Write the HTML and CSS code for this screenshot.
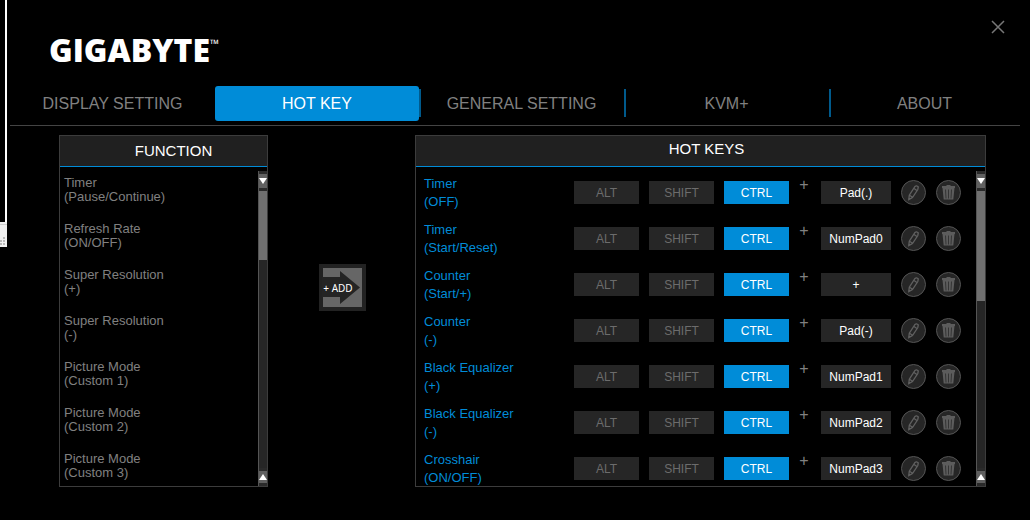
FILE: index.html
```html
<!DOCTYPE html>
<html lang="en">
<head>
<meta charset="utf-8">
<title>Hot Key</title>
<link rel="stylesheet" href="styles.css">
</head>
<body>
<svg class="defs" width="0" height="0" aria-hidden="true">
  <symbol id="pencil" viewBox="0 0 25 25">
    <circle cx="12.500" cy="12.500" r="12" fill="#262626" stroke="#555"/>
    <path d="M14 6.500Q15.500 5 17.300 7L16.800 9.500 11.500 17.500 7.800 19.500 8.300 15.200z M13 8.500l3.300 2.300 M8.500 15.300l3 2" fill="none" stroke="#606060" stroke-width="1.300"/>
  </symbol>
  <symbol id="trash" viewBox="0 0 25 25">
    <circle cx="12.500" cy="12.500" r="12" fill="#262626" stroke="#555"/>
    <path d="M6 6h4.500v-1h4v1H19v2H6z M6.500 8h12l-1.200 11.500H7.700z" fill="#5c5c5c"/>
    <path d="M9.500 9.500l.5 9M12.500 9.500v9M15.500 9.500l-.5 9" stroke="#303030" stroke-width=".9"/>
  </symbol>
</svg>

<div class="window-edge" aria-hidden="true">
  <div class="edge-line"></div>
  <svg class="grip" viewBox="0 0 7 25"><path d="M0 0h7v25H0z" fill="#f0f0f0"/><path d="M0 2.500h7" stroke="#d0d0d0"/><path d="M3 15h2v2H3zM0 18h2v2H0zM3 18h2v2H3zM0 21h2v2H0zM3 21h2v2H3z" fill="#b8b8b8"/></svg>
</div>

<header class="header">
  <div class="logo">GIGABYTE<span class="tm">™</span></div>
  <button class="close" aria-label="Close"><svg viewBox="0 0 14 14"><path d="M1 1l12 12M13 1L1 13"/></svg></button>
</header>

<nav class="tabs">
  <a class="tab" href="#display">DISPLAY SETTING</a>
  <a class="tab active" href="#hotkey" aria-current="page">HOT KEY</a>
  <a class="tab divided" href="#general">GENERAL SETTING</a>
  <a class="tab divided" href="#kvm">KVM+</a>
  <a class="tab divided" href="#about">ABOUT</a>
</nav>

<main class="main">
  <section class="panel">
    <h2 class="panel-title low">FUNCTION</h2>
    <div class="panel-body">
      <ul class="functions">
        <li>Timer<br>(Pause/Continue)</li>
        <li>Refresh Rate<br>(ON/OFF)</li>
        <li>Super Resolution<br>(+)</li>
        <li>Super Resolution<br>(-)</li>
        <li>Picture Mode<br>(Custom 1)</li>
        <li>Picture Mode<br>(Custom 2)</li>
        <li>Picture Mode<br>(Custom 3)</li>
      </ul>
      <div class="scrollbar">
        <button class="step" aria-label="Scroll functions up"><svg viewBox="0 0 8 6"><path d="M0 0h8L4 6z"/></svg></button>
        <div class="track"><div class="thumb short"></div></div>
        <button class="step end" aria-label="Scroll functions down"><svg viewBox="0 0 8 6"><path d="M0 6h8L4 0z"/></svg></button>
      </div>
    </div>
  </section>

  <button class="add">
    <svg viewBox="0 0 47 47" aria-hidden="true"><path d="M0 0h47v47H0z" fill="#222"/><path d="M4 4h39v39H4z" fill="#666"/><path d="M3 13h18V7l20 16.500L21 40v-7H3z" fill="#242424"/></svg>
    <span class="add-label">+ ADD</span>
  </button>

  <section class="panel">
    <h2 class="panel-title shifted">HOT KEYS</h2>
    <div class="panel-body">
      <ul class="hotkeys" id="hotkeys"></ul>
      <div class="scrollbar">
        <button class="step" aria-label="Scroll hot keys up"><svg viewBox="0 0 8 6"><path d="M0 0h8L4 6z"/></svg></button>
        <div class="track"><div class="thumb long"></div></div>
        <button class="step end" aria-label="Scroll hot keys down"><svg viewBox="0 0 8 6"><path d="M0 6h8L4 0z"/></svg></button>
      </div>
    </div>
  </section>
</main>
<script src="app.js"></script>
</body>
</html>
```

FILE: styles.css
```css
* { box-sizing: border-box; }
body {
  margin: 0;
  background: #000;
  color: #808080;
  font-family: "Liberation Sans", Arial, sans-serif;
  font-size: 13px;
}
button {
  padding: 0;
  border: 0;
  background: none;
  color: inherit;
  font: inherit;
}
ul { margin: 0; padding: 0; list-style: none; }
svg { display: block; }
.defs { position: absolute; }

.window-edge { position: absolute; left: 0; top: 0; width: 7px; }
.edge-line { height: 222px; margin-left: 5px; width: 2px; background: #fff; }
.grip { width: 7px; height: 25px; }

.header {
  display: flex;
  justify-content: space-between;
  align-items: flex-start;
  height: 85px;
  padding: 20px 25px 0 49px;
}
.logo {
  display: flex;
  align-items: flex-start;
  padding-top: 10px;
  color: #fff;
  font-family: "Open Sans", sans-serif;
  font-size: 32px;
  font-weight: 800;
  line-height: 40px;
}
.tm { font-size: 12px; font-weight: 400; line-height: 28px; }
.close svg { width: 14px; height: 14px; fill: none; stroke: #777; stroke-width: 1.5; }

.tabs {
  display: grid;
  grid-template-columns: 205fr 204fr 205fr 205fr 191fr;
  height: 41px;
  margin: 0 10px;
  padding-bottom: 3px;
  border-bottom: 1px solid #444;
}
.tab {
  display: flex;
  align-items: center;
  justify-content: center;
  color: #808080;
  font-size: 16px;
  text-decoration: none;
}
.tab.active {
  height: 35px;
  margin-top: 1px;
  border-radius: 3px;
  background: #008cd8;
  color: #fff;
}
.tab.divided {
  background: linear-gradient(#005a8c, #005a8c) left 4px / 2px 28px no-repeat;
}

.main {
  display: grid;
  grid-template-columns: 209fr 147fr 571fr;
  padding: 9px 44px 0 59px;
}
.panel { border: 1px solid #3c3c3c; }
.panel-title {
  height: 31px;
  margin: 0;
  border-bottom: 1px solid #008cd8;
  background: #202020;
  color: #fff;
  font-size: 15px;
  font-weight: 400;
  line-height: 26px;
  text-align: center;
}
.panel-title.low { padding-left: 20px; line-height: 30px; }
.panel-title.shifted { padding-left: 12px; }
.panel-body { display: flex; height: 319px; padding-top: 4px; overflow: hidden; }

.functions, .hotkeys { flex: 1; padding: 4px 0 0 8px; }
.functions { padding: 5px 0 0 4px; }
.functions li { height: 46px; line-height: 14px; }

.scrollbar {
  display: flex;
  flex-direction: column;
  width: 9px;
  border-left: 1px solid #555;
}
.step {
  display: flex;
  align-items: center;
  justify-content: center;
  height: 20px;
  border: solid #2a2a2a;
  border-width: 3px 0;
  background: #606060;
}
.step svg { width: 8px; height: 6px; fill: #fff; }
.step.end { height: 18px; }
.track { flex: 1; background: #262626; }
.thumb { background: #707070; }
.thumb.short { height: 69px; }
.thumb.long { height: 110px; }

.add {
  display: grid;
  justify-self: center;
  align-self: start;
  place-items: center;
  width: 47px;
  height: 47px;
  margin: 129px 0 0 1px;
}
.add svg, .add-label { grid-area: 1 / 1; }
.add svg { width: 47px; height: 47px; }
.add-label {
  margin-right: 8px;
  color: #fff;
  font-family: "Noto Sans", sans-serif;
  font-size: 10px;
  line-height: 14px;
  white-space: nowrap;
}

.hotkey {
  display: flex;
  align-items: center;
  height: 35px;
  margin-bottom: 11px;
  padding-right: 15px;
}
.name { flex: 1; align-self: flex-start; color: #008cd8; line-height: 18px; }
.keys { display: flex; gap: 10px; }
.key {
  width: 65px;
  height: 23px;
  padding-top: 1px;
  background: #262626;
  color: #6c6c6c;
  font-size: 12px;
}
.key.on { background: #008cd8; color: #fff; }
.plus { width: 32px; padding-bottom: 15px; padding-right: 2px; font-size: 16px; line-height: 18px; text-align: center; }
.key.value { width: 70px; color: #fff; }
.icon { margin-left: 10px; }
.icon svg { width: 25px; height: 25px; }
```

FILE: app.js
```javascript
const hotkeys = [
  ["Timer", "(OFF)", "Pad(.)"],
  ["Timer", "(Start/Reset)", "NumPad0"],
  ["Counter", "(Start/+)", "+"],
  ["Counter", "(-)", "Pad(-)"],
  ["Black Equalizer", "(+)", "NumPad1"],
  ["Black Equalizer", "(-)", "NumPad2"],
  ["Crosshair", "(ON/OFF)", "NumPad3"],
];
document.getElementById("hotkeys").innerHTML = hotkeys.map(([name, detail, key]) => `
  <li class="hotkey">
    <div class="name">${name}<br>${detail}</div>
    <div class="keys">
      <button class="key" aria-pressed="false">ALT</button>
      <button class="key" aria-pressed="false">SHIFT</button>
      <button class="key on" aria-pressed="true">CTRL</button>
    </div>
    <span class="plus">+</span>
    <button class="key value">${key}</button>
    <button class="icon" aria-label="Edit"><svg><use href="#pencil"/></svg></button>
    <button class="icon" aria-label="Delete"><svg><use href="#trash"/></svg></button>
  </li>`).join("");
```
